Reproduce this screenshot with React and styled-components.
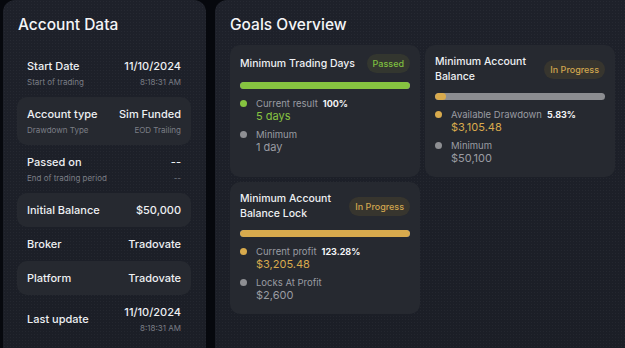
import React from "react";
import styled, { createGlobalStyle } from "styled-components";

const Global = createGlobalStyle`
  html, body { margin: 0; padding: 0; background: #06080d; }
  body { font-family: Inter, "Noto Sans", sans-serif; color: #eef0f3; overflow: hidden; }
  #root { width: 625px; height: 348px; overflow: hidden; }
`;

const Page = styled.div`
  display: flex;
  gap: 9px;
  padding-left: 3px;
  width: 660px;
  height: 348px;
  background: #06080d;
`;

const Panel = styled.section`
  flex: none;
  width: ${(p) => p.$w}px;
  height: 380px;
  box-sizing: border-box;
  border-radius: 12px;
  padding: 15px ${(p) => p.$pr}px 0 ${(p) => p.$pl}px;
  background-color: #1c1f27;
  background-image: radial-gradient(rgba(255, 255, 255, 0.035) 0.6px, transparent 0.8px),
    linear-gradient(180deg, #1e212a 0%, #1b1e26 100%);
  background-size: 3px 3px, 100% 100%;
`;

const Title = styled.h2`
  margin: 0 0 ${(p) => p.$mb}px ${(p) => p.$ml}px;
  font-size: 15.5px;
  line-height: 20px;
  font-weight: 500;
  color: #f4f5f7;
`;

const Rows = styled.div`
  display: flex;
  flex-direction: column;
`;

const Row = styled.div`
  display: flex;
  justify-content: space-between;
  align-items: center;
  padding: 10px;
  border-radius: 10px;
  background: ${(p) => (p.$hl ? "#262930" : "transparent")};
`;

const Col = styled.div`
  display: flex;
  flex-direction: column;
  align-items: ${(p) => (p.$right ? "flex-end" : "flex-start")};
  gap: 5px;
`;

const Label = styled.div`
  font-size: 11px;
  line-height: 14px;
  font-weight: 500;
  color: #eef0f3;
`;

const Sub = styled.div`
  font-size: 8px;
  line-height: 9px;
  color: #7b7e86;
`;

const Grid = styled.div`
  display: grid;
  grid-template-columns: 190px 190px;
  gap: 5px;
  align-items: stretch;
`;

const Card = styled.div`
  background: #262930;
  border-radius: 10px;
  padding: 9px 10px 12px;
  display: flex;
  flex-direction: column;
`;

const CardHead = styled.div`
  display: flex;
  justify-content: space-between;
  align-items: center;
  gap: 8px;
  min-height: 19px;
`;

const CardTitle = styled.div`
  flex: 1;
  font-size: 10.5px;
  line-height: 15px;
  font-weight: 500;
  color: #eef0f3;
  white-space: ${(p) => (p.$oneLine ? "nowrap" : "normal")};
`;

const Badge = styled.span`
  flex: none;
  font-size: 9px;
  line-height: 19px;
  height: 19px;
  padding: 0 6px;
  border-radius: 10px;
  font-weight: 500;
  color: ${(p) => (p.$kind === "ok" ? "#7fbf3f" : "#cfa54f")};
  background: ${(p) => (p.$kind === "ok" ? "#33362f" : "#37352e")};
`;

const Track = styled.div`
  margin-top: 9px;
  height: 7px;
  border-radius: 4px;
  background: #8c8d91;
  overflow: hidden;
`;

const Fill = styled.div`
  height: 100%;
  border-radius: 4px;
  background: ${(p) => p.$c};
`;

const Items = styled.div`
  margin-top: 8px;
  display: flex;
  flex-direction: column;
  gap: 5px;
`;

const Item = styled.div`
  display: grid;
  grid-template-columns: 16px 1fr;
  align-items: start;
`;

const Dot = styled.span`
  width: 7px;
  height: 7px;
  border-radius: 50%;
  margin-top: 3px;
  background: ${(p) => p.$c};
`;

const ItemLabel = styled.div`
  font-size: 9.5px;
  line-height: 13px;
  color: #9a9ca2;
  display: flex;
  gap: 5px;
`;

const Pct = styled.span`
  color: #f3f4f6;
  font-weight: 700;
  font-size: 9px;
`;

const ItemValue = styled.div`
  font-size: 11px;
  line-height: 13px;
  color: ${(p) => p.$c};
`;

const GREEN = "#86c440";
const GOLD = "#d8aa4d";
const GREY = "#8e8f93";

const accountRows = [
  { label: "Start Date", sub: "Start of trading", value: "11/10/2024", vsub: "8:18:31 AM" },
  { label: "Account type", sub: "Drawdown Type", value: "Sim Funded", vsub: "EOD Trailing", hl: true },
  { label: "Passed on", sub: "End of trading period", value: "--", vsub: "--" },
  { label: "Initial Balance", value: "$50,000", hl: true },
  { label: "Broker", value: "Tradovate" },
  { label: "Platform", value: "Tradovate", hl: true },
  { label: "Last update", value: "11/10/2024", vsub: "8:18:31 AM" },
];

const goals = [
  {
    title: "Minimum Trading Days",
    oneLine: true,
    badge: "Passed",
    kind: "ok",
    fill: 100,
    fillColor: GREEN,
    items: [
      { dot: GREEN, label: "Current result", pct: "100%", value: "5 days", vc: GREEN },
      { dot: GREY, label: "Minimum", value: "1 day", vc: "#9a9ca2" },
    ],
  },
  {
    title: "Minimum Account Balance",
    badge: "In Progress",
    kind: "prog",
    fill: 6.5,
    fillColor: GOLD,
    items: [
      { dot: GOLD, label: "Available Drawdown", pct: "5.83%", value: "$3,105.48", vc: GOLD },
      { dot: GREY, label: "Minimum", value: "$50,100", vc: "#9a9ca2" },
    ],
  },
  {
    title: "Minimum Account Balance Lock",
    badge: "In Progress",
    kind: "prog",
    fill: 100,
    fillColor: GOLD,
    items: [
      { dot: GOLD, label: "Current profit", pct: "123.28%", value: "$3,205.48", vc: GOLD },
      { dot: GREY, label: "Locks At Profit", value: "$2,600", vc: "#9a9ca2" },
    ],
  },
];

export default function App() {
  return (
    <>
      <Global />
      <Page>
        <Panel $w={203} $pl={14} $pr={15}>
          <Title $mb={14} $ml={1}>Account Data</Title>
          <Rows>
            {accountRows.map((r) => (
              <Row key={r.label} $hl={r.hl}>
                <Col>
                  <Label>{r.label}</Label>
                  {r.sub && <Sub>{r.sub}</Sub>}
                </Col>
                <Col $right>
                  <Label>{r.value}</Label>
                  {r.vsub && <Sub>{r.vsub}</Sub>}
                </Col>
              </Row>
            ))}
          </Rows>
        </Panel>
        <Panel $w={430} $pl={15} $pr={15}>
          <Title $mb={10} $ml={0}>Goals Overview</Title>
          <Grid>
            {goals.map((g) => (
              <Card key={g.title}>
                <CardHead>
                  <CardTitle $oneLine={g.oneLine}>{g.title}</CardTitle>
                  <Badge $kind={g.kind}>{g.badge}</Badge>
                </CardHead>
                <Track>
                  <Fill $c={g.fillColor} style={{ width: `${g.fill}%` }} />
                </Track>
                <Items>
                  {g.items.map((it) => (
                    <Item key={it.label}>
                      <Dot $c={it.dot} />
                      <div>
                        <ItemLabel>
                          {it.label}
                          {it.pct && <Pct>{it.pct}</Pct>}
                        </ItemLabel>
                        <ItemValue $c={it.vc}>{it.value}</ItemValue>
                      </div>
                    </Item>
                  ))}
                </Items>
              </Card>
            ))}
          </Grid>
        </Panel>
      </Page>
    </>
  );
}
